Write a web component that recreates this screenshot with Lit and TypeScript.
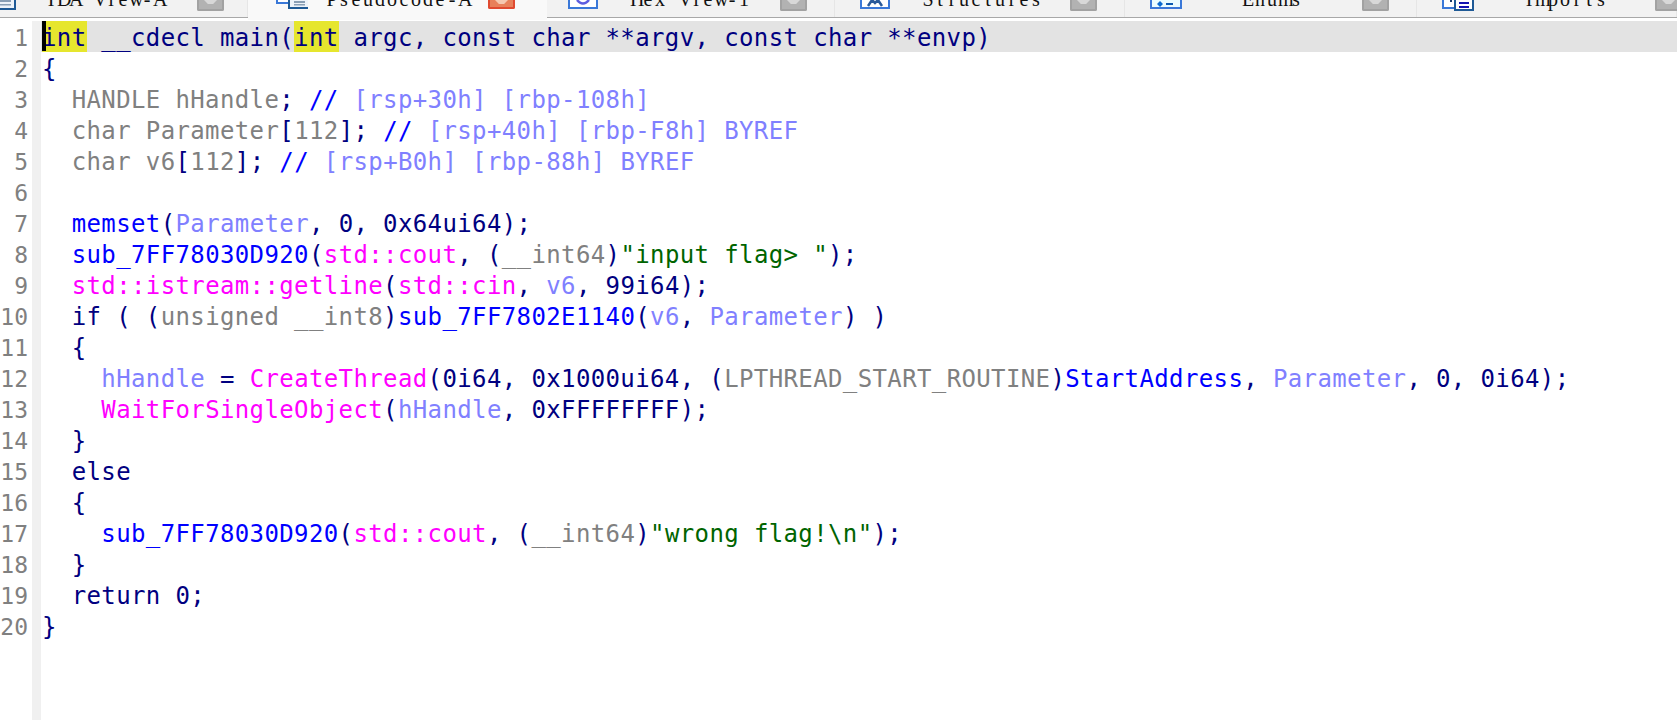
import { LitElement, html, css, svg } from "lit";
import { customElement } from "lit/decorators.js";

type Seg = [string, string];
const K = "k", G = "g", C = "c", L = "l", B = "b", P = "p", S = "s";
const lines: Seg[][] = [
  [[K, "int __cdecl main(int argc, const char **argv, const char **envp)"]],
  [[K, "{"]],
  [[G, "  HANDLE hHandle"], [K, "; "], [C, "//"], [L, " [rsp+30h] [rbp-108h]"]],
  [[G, "  char Parameter"], [K, "["], [G, "112"], [K, "]; "], [C, "//"], [L, " [rsp+40h] [rbp-F8h] BYREF"]],
  [[G, "  char v6"], [K, "["], [G, "112"], [K, "]; "], [C, "//"], [L, " [rsp+B0h] [rbp-88h] BYREF"]],
  [],
  [[K, "  "], [B, "memset"], [K, "("], [L, "Parameter"], [K, ", 0, 0x64ui64);"]],
  [[K, "  "], [B, "sub_7FF78030D920"], [K, "("], [P, "std::cout"], [K, ", ("], [G, "__int64"], [K, ")"], [S, "\"input flag> \""], [K, ");"]],
  [[K, "  "], [P, "std::istream::getline"], [K, "("], [P, "std::cin"], [K, ", "], [L, "v6"], [K, ", 99i64);"]],
  [[K, "  if ( ("], [G, "unsigned __int8"], [K, ")"], [B, "sub_7FF7802E1140"], [K, "("], [L, "v6"], [K, ", "], [L, "Parameter"], [K, ") )"]],
  [[K, "  {"]],
  [[K, "    "], [L, "hHandle"], [K, " = "], [P, "CreateThread"], [K, "(0i64, 0x1000ui64, ("], [G, "LPTHREAD_START_ROUTINE"], [K, ")"], [B, "StartAddress"], [K, ", "], [L, "Parameter"], [K, ", 0, 0i64);"]],
  [[K, "    "], [P, "WaitForSingleObject"], [K, "("], [L, "hHandle"], [K, ", 0xFFFFFFFF);"]],
  [[K, "  }"]],
  [[K, "  else"]],
  [[K, "  {"]],
  [[K, "    "], [B, "sub_7FF78030D920"], [K, "("], [P, "std::cout"], [K, ", ("], [G, "__int64"], [K, ")"], [S, "\"wrong flag!\\n\""], [K, ");"]],
  [[K, "  }"]],
  [[K, "  return 0;"]],
  [[K, "}"]],
];

const BL = "#3a78d8", DK = "#1f5a96";
const docLines = (x: number, c: string) => svg`
  <rect x=${x} y="-4" width="20" height="12" fill="#eef3f9" stroke=${DK} stroke-width="2"/>
  <rect x=${x + 5} y="1" width="11" height="2" fill=${c}/><rect x=${x + 5} y="4" width="11" height="1.5" fill=${c}/>`;

const icons = [
  svg`<svg class="ico" width="16" height="10" viewBox="0 0 16 10"><rect x="-4" y="-4" width="19" height="13" fill="#eef3f9" stroke=${DK} stroke-width="2"/><rect x="0" y="0" width="11" height="2" fill="#8a9fb5"/><rect x="0" y="4" width="11" height="1.5" fill="#8a9fb5"/></svg>`,
  svg`<svg class="ico" width="32" height="9" viewBox="0 0 32 9"><rect x="1" y="-6" width="13" height="9" fill="#fff" stroke=${BL} stroke-width="2"/>${docLines(13, "#8a9fb5")}</svg>`,
  svg`<svg class="ico" width="30" height="9" viewBox="0 0 30 9"><rect x="1" y="-6" width="28" height="14" fill="#fff" stroke=${BL} stroke-width="2"/><path d="M9 0Q15 7 21 0" fill="none" stroke="#5d5de0" stroke-width="2.5"/></svg>`,
  svg`<svg class="ico" width="30" height="9" viewBox="0 0 30 9"><rect x="1" y="-6" width="28" height="14" fill="#fff" stroke=${BL} stroke-width="2"/><path d="M8 6L12 0L15 3L18 0L22 6" fill="none" stroke="#2a5a9a" stroke-width="2.5"/></svg>`,
  svg`<svg class="ico" width="32" height="9" viewBox="0 0 32 9"><rect x="1" y="-6" width="30" height="14" fill="#eafcff" stroke=${BL} stroke-width="2"/><path d="M10 1L13 4L10 7L7 4Z" fill="#0a6ad0"/><rect x="16" y="3" width="7" height="2" fill="#0a5ab0"/></svg>`,
  svg`<svg class="ico" width="32" height="11" viewBox="0 0 32 11"><rect x="1" y="-6" width="13" height="14" fill="#fff" stroke=${BL} stroke-width="2"/><rect x="8" y="0" width="2" height="2" fill="#1a3a6a"/><rect x="13" y="-3" width="18" height="13" fill="#fff" stroke=${DK} stroke-width="2"/><rect x="17" y="2" width="10" height="2" fill="#1414b0"/><rect x="17" y="6" width="10" height="2" fill="#1414b0"/></svg>`,
];

// pad: tab-left to icon, textGap: icon to text, closeGap: text to close button
const tabs = [
  { name: "IDA View-A", w: 248, pad: 0, textGap: 29, closeGap: 32, icon: 0 },
  { name: "Pseudocode-A", w: 299, pad: 28, textGap: 18, closeGap: 18, icon: 1, active: true },
  { name: "Hex View-1", w: 288, pad: 21, textGap: 32, closeGap: 30, icon: 2 },
  { name: "Structures", w: 290, pad: 25, textGap: 32, closeGap: 28, icon: 3 },
  { name: "Enums", w: 292, pad: 25, textGap: 60, closeGap: 60, icon: 4 },
  { name: "Imports", w: 260, pad: 25, textGap: 49, closeGap: 48, icon: 5 },
];

@customElement("app-root")
export class AppRoot extends LitElement {
  static styles = css`
    :host { display: block; width: 1677px; height: 720px; overflow: hidden; background: #fff; }
    .tabs { display: flex; height: 18px; }
    .tab { flex: none; height: 18px; display: flex; align-items: flex-start; box-sizing: border-box; overflow: hidden; background: #f2f2f2; border-bottom: 1px solid #a8a8a8; box-shadow: inset -1px 0 0 #e6e6e6; }
    .tab.active { background: #f9f9f9; border-bottom: none; box-shadow: none; height: 20px; }
    .ico { flex: none; display: block; }
    .name { flex: none; font: 20px/20px "Liberation Serif", serif; color: #111; white-space: pre; margin-top: -11px; display: flex; }
    .ch { display: inline-block; width: 12px; text-align: center; }
    .x { flex: none; width: 27px; height: 11px; box-sizing: border-box; background: #b2b2b2; border: 2px solid #a2a2a2; border-top: none; border-radius: 0 0 2px 2px; }
    .x::after { content: ""; display: block; width: 13px; height: 4px; margin: 0 auto; background: #d8d8d8; clip-path: polygon(0 0, 100% 0, 70% 100%, 30% 100%); }
    .tab.active .x { height: 9px; background: #e8805a; border-color: #e04a30; }
    .tab.active .x::after { background: #f5c8b0; }
    .editor { display: grid; grid-template-columns: 32px 9px 1fr; height: 699px; margin-top: 3px; }
    .nums { font: 23px/34px "DejaVu Sans Mono", monospace; color: #808080; text-align: right; padding-right: 4px; }
    .num { height: 31px; }
    .strip { background: #f0f0f0; }
    .code { font: 24px/35px "DejaVu Sans Mono", monospace; letter-spacing: 0.38px; }
    .row { height: 31px; white-space: pre; padding-left: 1px; position: relative; }
    .row.cur { background: #e3e3e3; }
    .k { color: #000080; } .g { color: #808080; } .c { color: #0000ff; } .l { color: #8080ff; }
    .b { color: #0000ff; } .p { color: #ff00ff; } .s { color: #006400; }
    .hl { background: #e6e62e; display: inline-block; height: 31px; vertical-align: top; }
    .caret { position: absolute; left: 1px; top: 0; width: 4px; height: 30px; background: #000; }
  `;

  renderRow(segs: Seg[], i: number) {
    if (i === 0) {
      return html`<div class="row cur"><span class="k hl">int</span><span class="k"> __cdecl main(</span><span class="k hl">int</span><span class="k"> argc, const char **argv, const char **envp)</span><span class="caret"></span></div>`;
    }
    return html`<div class="row">${segs.map(([c, t]) => html`<span class=${c}>${t}</span>`)}</div>`;
  }

  render() {
    return html`
      <div class="tabs">
        ${tabs.map((t) => html`<div class="tab ${t.active ? "active" : ""}" style="width:${t.w}px;padding-left:${t.pad}px">
          ${icons[t.icon]}
          <span class="name" style="margin-left:${t.textGap}px">${[...t.name].map((ch) => html`<span class="ch">${ch}</span>`)}</span>
          <span class="x" style="margin-left:${t.closeGap}px"></span>
        </div>`)}
      </div>
      <div class="editor">
        <div class="nums">${lines.map((_, i) => html`<div class="num">${i + 1}</div>`)}</div>
        <div class="strip"></div>
        <div class="code">${lines.map((l, i) => this.renderRow(l, i))}</div>
      </div>
    `;
  }
}
